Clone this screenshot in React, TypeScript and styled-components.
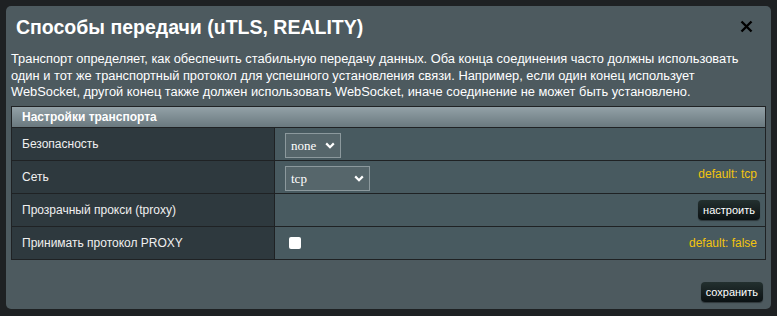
import styled, { createGlobalStyle } from "styled-components";

const GlobalStyle = createGlobalStyle`
  html, body {
    margin: 0;
    padding: 0;
    background: #1e2123;
    font-family: "Liberation Sans", Arial, sans-serif;
  }
`;

const Page = styled.div`
  width: 777px;
  height: 316px;
  padding: 6px;
  box-sizing: border-box;
`;

const Modal = styled.div`
  width: 765px;
  height: 303px;
  box-sizing: border-box;
  background: #4d5a5f;
  border-radius: 5px;
  padding: 10px 5px 0 5px;
  display: flex;
  flex-direction: column;
  color: #fff;
`;

const TitleBar = styled.div`
  display: flex;
  justify-content: space-between;
  align-items: center;
  padding: 0 12px 0 5px;
  height: 22px;
`;

const Title = styled.h1`
  margin: 0;
  font-size: 19.5px;
  font-weight: bold;
  color: #fff;
`;

const CloseButton = styled.div`
  width: 14px;
  height: 14px;
  display: flex;
  cursor: pointer;
`;

const Description = styled.p`
  margin: 13px 0 0 0;
  font-size: 12.85px;
  line-height: 16.5px;
  color: #fff;
`;

const Table = styled.div`
  margin-top: 5px;
  border: 1px solid #1f2224;
  display: flex;
  flex-direction: column;
`;

const TableHead = styled.div`
  height: 20px;
  display: flex;
  align-items: center;
  padding-left: 10px;
  font-size: 12px;
  font-weight: bold;
  background: linear-gradient(to bottom, #93a1a7, #6a797f);
  border-bottom: 1px solid #1f2224;
`;

const Row = styled.div<{ $last?: boolean }>`
  display: grid;
  grid-template-columns: 263px 1fr;
  height: 32px;
  border-bottom: ${({ $last }) => ($last ? "none" : "1px solid #1f2224")};
`;

const Label = styled.div`
  background: #2e393e;
  border-right: 1px solid #1f2224;
  display: flex;
  align-items: center;
  padding-left: 10px;
  font-size: 12px;
  color: #f0f0f0;
`;

const Cell = styled.div<{ $top?: boolean }>`
  background: #485a60;
  display: flex;
  align-items: ${({ $top }) => ($top ? "flex-start" : "center")};
  justify-content: space-between;
  padding: 0 5px 0 10px;
`;

const Select = styled.div<{ $width: number }>`
  width: ${({ $width }) => $width}px;
  height: 25px;
  margin-top: 4px;
  box-sizing: border-box;
  border: 1px solid #8c999d;
  background: #56666b;
  display: flex;
  align-items: center;
  justify-content: space-between;
  padding: 0 5px 0 5px;
  font-family: "Liberation Serif", "Times New Roman", serif;
  font-size: 13px;
  color: #fff;
  align-self: center;
`;

const Hint = styled.span<{ $offset?: number }>`
  color: #f2c40f;
  font-size: 12px;
  margin-top: ${({ $offset }) => $offset ?? 0}px;
  margin-left: auto;
  margin-right: 3px;
`;

const DarkButton = styled.button`
  height: 20px;
  padding: 0 5px;
  border: none;
  border-radius: 4px;
  background: linear-gradient(to bottom, #23302f, #0b1113);
  box-shadow: 0 1px 1px rgba(0, 0, 0, 0.4);
  color: #fff;
  font-family: "Liberation Sans", Arial, sans-serif;
  font-size: 11px;
  margin-left: auto;
  cursor: pointer;
`;

const Checkbox = styled.div`
  width: 12px;
  height: 12px;
  margin-left: 4px;
  background: #fff;
  border-radius: 2px;
`;

const Footer = styled.div`
  display: flex;
  justify-content: flex-end;
  margin-top: 22px;
  padding-right: 3px;
`;

function Chevron() {
  return (
    <svg width="10" height="7" viewBox="0 0 10 7">
      <path d="M1.2 1.4 L5 5.2 L8.8 1.4" fill="none" stroke="#fff" strokeWidth="2.2" />
    </svg>
  );
}

export default function App() {
  return (
    <>
      <GlobalStyle />
      <Page>
        <Modal>
          <TitleBar>
            <Title>Способы передачи (uTLS, REALITY)</Title>
            <CloseButton>
              <svg width="13" height="13" viewBox="0 0 13 13">
                <path d="M1.5 1.5 L11.5 11.5 M11.5 1.5 L1.5 11.5" stroke="#000" strokeWidth="2.4" />
              </svg>
            </CloseButton>
          </TitleBar>
          <Description>
            Транспорт определяет, как обеспечить стабильную передачу данных. Оба конца соединения часто должны использовать
            один и тот же транспортный протокол для успешного установления связи. Например, если один конец использует
            WebSocket, другой конец также должен использовать WebSocket, иначе соединение не может быть установлено.
          </Description>
          <Table>
            <TableHead>Настройки транспорта</TableHead>
            <Row>
              <Label>Безопасность</Label>
              <Cell>
                <Select $width={56}>
                  none
                  <Chevron />
                </Select>
              </Cell>
            </Row>
            <Row>
              <Label>Сеть</Label>
              <Cell $top>
                <Select $width={85}>
                  tcp
                  <Chevron />
                </Select>
                <Hint $offset={6}>default: tcp</Hint>
              </Cell>
            </Row>
            <Row>
              <Label>Прозрачный прокси (tproxy)</Label>
              <Cell>
                <DarkButton>настроить</DarkButton>
              </Cell>
            </Row>
            <Row $last>
              <Label>Принимать протокол PROXY</Label>
              <Cell>
                <Checkbox />
                <Hint>default: false</Hint>
              </Cell>
            </Row>
          </Table>
          <Footer>
            <DarkButton>сохранить</DarkButton>
          </Footer>
        </Modal>
      </Page>
    </>
  );
}
